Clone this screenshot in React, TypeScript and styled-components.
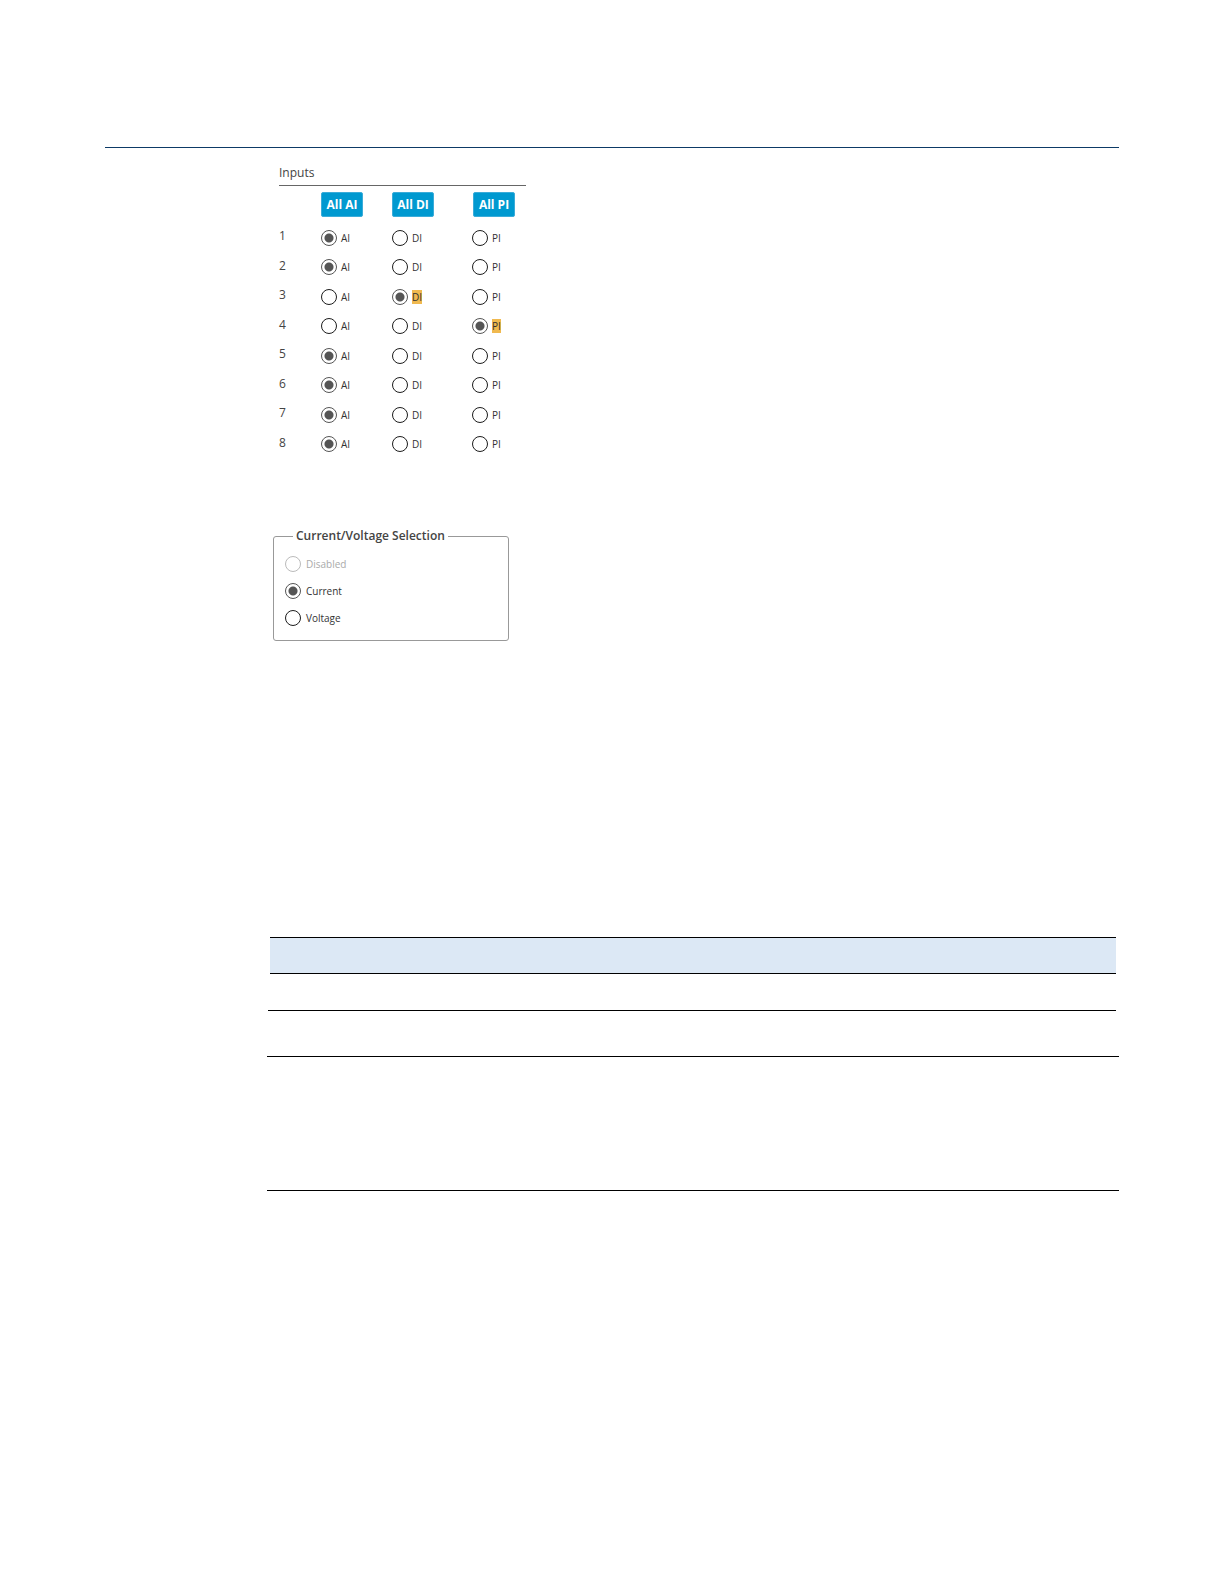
import React, { useState } from "react";
import styled, { createGlobalStyle } from "styled-components";

const GlobalStyle = createGlobalStyle`
  *, *::before, *::after { box-sizing: border-box; }
  body {
    margin: 0;
    background: #fff;
    color: #444;
    font-family: "Open Sans", "Noto Sans", sans-serif;
  }
`;

const Page = styled.main`
  padding: 147px 105px 96px;
`;

const PageRule = styled.hr`
  margin: 0;
  border: 0;
  height: 1px;
  background: #0d3a66;
`;

const Content = styled.div`
  padding-left: 162px;
`;

const InputsPanel = styled.section`
  width: 247px;
  margin: 14px 0 0 12px;
`;

const PanelTitle = styled.h2`
  margin: 0;
  padding-bottom: 2px;
  border-bottom: 1px solid #666;
  font-size: 12px;
  line-height: 21px;
  font-weight: 500;
`;

const ChannelRow = styled.div`
  display: grid;
  grid-template-columns: 42px 71px 80px 1fr;
  align-items: center;
`;

const ButtonRow = styled(ChannelRow)`
  grid-template-columns: 42px 71px 81px 1fr;
  padding-top: 6px;
`;

const AllButton = styled.button`
  width: 42px;
  height: 25px;
  padding: 0;
  border: 1px solid #3bacd9;
  border-radius: 2px;
  background: #0099d0;
  color: #fff;
  font: 700 12px/23px "Open Sans", "Noto Sans", sans-serif;
  white-space: nowrap;
`;

const ChannelList = styled.div`
  display: grid;
  grid-template-rows: repeat(8, 1fr);
  height: 236px;
  margin-top: 6px;
`;

const ChannelNumber = styled.span`
  padding-bottom: 3px;
  font-size: 12px;
  line-height: 16px;
  font-weight: 500;
`;

const Option = styled.label<{ $disabled?: boolean }>`
  display: flex;
  align-items: center;
  gap: 4px;
  color: ${(p) => (p.$disabled ? "#aaa" : "#333")};
  font-size: 10px;
  line-height: 14px;
`;

const Radio = styled.input`
  appearance: none;
  flex: none;
  width: 16px;
  height: 16px;
  margin: 0;
  border: 1px solid #1c1c1c;
  border-radius: 50%;
  background: #fff;

  &:checked {
    border-color: #555;
    background: radial-gradient(circle, #555 4px, #fff 5px);
  }

  &:disabled {
    border-color: #bbb;
  }
`;

const OptionText = styled.span<{ $changed?: boolean }>`
  background: ${(p) => (p.$changed ? "#f0b94f" : "transparent")};
`;

const SelectionGroup = styled.fieldset`
  width: 236px;
  margin: 69px 0 0 6px;
  padding: 12px 11px 14px;
  border: 1px solid #999;
  border-radius: 3px;

  label {
    gap: 5px;
  }
`;

const SelectionLegend = styled.legend`
  margin-left: 8px;
  padding: 0 3px;
  font-size: 12px;
  line-height: 16px;
  font-weight: 600;
`;

const SelectionOptions = styled.div`
  display: grid;
  gap: 11px;
`;

const RuledArea = styled.section`
  margin-top: 296px;
`;

const HeaderBand = styled.div`
  height: 37px;
  margin: 0 3px;
  border: solid #000;
  border-width: 1px 0;
  background: #dce8f5;
`;

const RuledRow = styled.div<{ $height: number; $inset?: boolean }>`
  height: ${(p) => p.$height}px;
  margin: ${(p) => (p.$inset ? "0 3px 0 1px" : "0")};
  border-bottom: 1px solid #000;
`;

const kinds = ["AI", "DI", "PI"];
const initialChannels = ["AI", "AI", "DI", "PI", "AI", "AI", "AI", "AI"];
const selections = ["Disabled", "Current", "Voltage"];

export default function App() {
  const [channels, setChannels] = useState(initialChannels);
  const [selection, setSelection] = useState("Current");

  const setChannel = (index: number, kind: string) =>
    setChannels(channels.map((c, i) => (i === index ? kind : c)));

  return (
    <>
      <GlobalStyle />
      <Page>
        <PageRule />
        <Content>
          <InputsPanel>
            <PanelTitle>Inputs</PanelTitle>
            <ButtonRow>
              <span />
              {kinds.map((kind) => (
                <AllButton
                  key={kind}
                  type="button"
                  onClick={() => setChannels(channels.map(() => kind))}
                >
                  All {kind}
                </AllButton>
              ))}
            </ButtonRow>
            <ChannelList>
              {channels.map((current, index) => (
                <ChannelRow key={index}>
                  <ChannelNumber>{index + 1}</ChannelNumber>
                  {kinds.map((kind) => (
                    <Option key={kind}>
                      <Radio
                        type="radio"
                        name={`input-${index + 1}`}
                        checked={current === kind}
                        onChange={() => setChannel(index, kind)}
                      />
                      <OptionText $changed={current === kind && kind !== "AI"}>
                        {kind}
                      </OptionText>
                    </Option>
                  ))}
                </ChannelRow>
              ))}
            </ChannelList>
          </InputsPanel>

          <SelectionGroup>
            <SelectionLegend>Current/Voltage Selection</SelectionLegend>
            <SelectionOptions>
              {selections.map((name) => (
                <Option key={name} $disabled={name === "Disabled"}>
                  <Radio
                    type="radio"
                    name="selection"
                    disabled={name === "Disabled"}
                    checked={selection === name}
                    onChange={() => setSelection(name)}
                  />
                  <OptionText>{name}</OptionText>
                </Option>
              ))}
            </SelectionOptions>
          </SelectionGroup>

          <RuledArea>
            <HeaderBand />
            <RuledRow $height={37} $inset />
            <RuledRow $height={46} />
            <RuledRow $height={134} />
          </RuledArea>
        </Content>
      </Page>
    </>
  );
}
